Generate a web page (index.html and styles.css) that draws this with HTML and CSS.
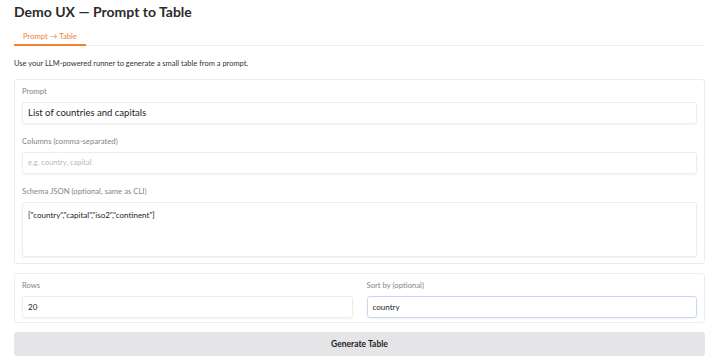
FILE: index.html
```html
<!DOCTYPE html>
<html>
<head>
<meta charset="utf-8">
<link rel="stylesheet" href="styles.css">
</head>
<body>
<div class="app">
  <h1 class="title">Demo UX — Prompt to Table</h1>
  <div class="tabs">
    <div class="tab active">Prompt → Table</div>
  </div>
  <p class="desc">Use your LLM-powered runner to generate a small table from a prompt.</p>
  <div class="panel">
    <div class="field">
      <div class="label">Prompt</div>
      <div class="input prompt">List of countries and capitals</div>
    </div>
    <div class="field">
      <div class="label">Columns (comma-separated)</div>
      <div class="input placeholder">e.g. country, capital</div>
    </div>
    <div class="field">
      <div class="label">Schema JSON (optional, same as CLI)</div>
      <div class="input textarea">["country","capital","iso2","continent"]</div>
    </div>
  </div>
  <div class="panel row">
    <div class="field col">
      <div class="label">Rows</div>
      <div class="input">20</div>
    </div>
    <div class="field col">
      <div class="label">Sort by (optional)</div>
      <div class="input focus">country</div>
    </div>
  </div>
  <button class="btn">Generate Table</button>
</div>
</body>
</html>
```
FILE: styles.css
```css
html, body {
  margin: 0;
  padding: 0;
  background: #ffffff;
}
body {
  font-family: "Lato", "Noto Sans", sans-serif;
  color: #333;
}
.app {
  padding: 0 15px 0 14px;
  display: flex;
  flex-direction: column;
}
.title {
  margin: 0;
  font-size: 14px;
  line-height: 24px;
  font-weight: 700;
  color: #2b2b2b;
}
.tabs {
  display: flex;
  border-bottom: 1px solid #ececec;
  margin-top: 4px;
}
.tab {
  font-size: 7.7px;
  line-height: 10px;
  color: #ee8433;
  padding: 3px 9px 3px 9px;
  border-bottom: 2px solid #ee8433;
  margin-bottom: -1px;
}
.desc {
  margin: 12px 0 0 0;
  font-size: 7.5px;
  line-height: 12px;
  color: #333;
}
.panel {
  margin-top: 9px;
  border: 1px solid #ececec;
  border-radius: 3px;
  padding: 5px 7px 6px 7px;
  display: flex;
  flex-direction: column;
  gap: 11px;
}
.field {
  display: flex;
  flex-direction: column;
}
.label {
  font-size: 7.7px;
  color: #858585;
  line-height: 12px;
  height: 12px;
  margin-bottom: 5px;
}
.input {
  height: 22px;
  box-sizing: border-box;
  border: 1px solid #ededed;
  border-radius: 3px;
  box-shadow: 0 1px 2px rgba(0,0,0,0.05);
  font-size: 8px;
  line-height: 20px;
  padding: 0 5px;
  color: #222;
  background: #fff;
}
.prompt { font-size: 9.5px; }
.placeholder { color: #b8b8b8; font-size: 7.5px; }
.textarea {
  height: 55px;
  line-height: 12px;
  padding-top: 6px;
}
.row {
  flex-direction: row;
  gap: 14px;
  padding-bottom: 4px;
}
.col { flex: 1; }
.focus { border-color: #c7daf3; }
.btn {
  margin-top: 9px;
  height: 24px;
  border: none;
  border-radius: 3px;
  background: #e5e5e7;
  font-family: "Lato", "Noto Sans", sans-serif;
  font-weight: 700;
  font-size: 8.5px;
  color: #222;
}
```
